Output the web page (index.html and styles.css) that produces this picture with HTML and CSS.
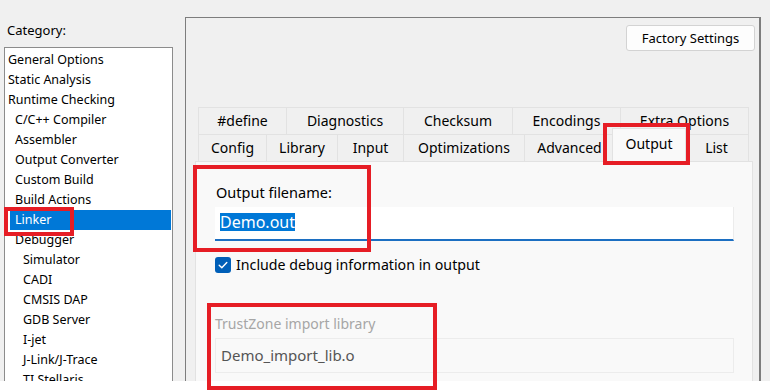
FILE: index.html
```html
<!DOCTYPE html>
<html>
<head>
<meta charset="utf-8">
<link rel="stylesheet" href="styles.css">
</head>
<body>
<div class="app">
  <div class="left">
    <div class="cat-label">Category:</div>
    <ul class="tree">
      <li class="l0"><span>General Options</span></li>
      <li class="l0"><span>Static Analysis</span></li>
      <li class="l0"><span>Runtime Checking</span></li>
      <li class="l1"><span>C/C++ Compiler</span></li>
      <li class="l1"><span>Assembler</span></li>
      <li class="l1"><span>Output Converter</span></li>
      <li class="l1"><span>Custom Build</span></li>
      <li class="l1"><span>Build Actions</span></li>
      <li class="l1 sel"><span>Linker</span></li>
      <li class="l1"><span>Debugger</span></li>
      <li class="l2"><span>Simulator</span></li>
      <li class="l2"><span>CADI</span></li>
      <li class="l2"><span>CMSIS DAP</span></li>
      <li class="l2"><span>GDB Server</span></li>
      <li class="l2"><span>I-jet</span></li>
      <li class="l2"><span>J-Link/J-Trace</span></li>
      <li class="l2"><span>TI Stellaris</span></li>
    </ul>
  </div>
  <div class="panel">
    <div class="toolbar">
      <button class="btn">Factory Settings</button>
    </div>
    <div class="tabs">
      <div class="tabrow">
        <div class="tab w88">#define</div>
        <div class="tab w117">Diagnostics</div>
        <div class="tab w109">Checksum</div>
        <div class="tab w108">Encodings</div>
        <div class="tab w129">Extra Options</div>
      </div>
      <div class="tabrow">
        <div class="tab w68">Config</div>
        <div class="tab w71">Library</div>
        <div class="tab w66">Input</div>
        <div class="tab w121">Optimizations</div>
        <div class="tab w90">Advanced</div>
        <div class="tab active w70">Output</div>
        <div class="tab w65">List</div>
      </div>
    </div>
    <div class="pane">
      <div class="field-label">Output filename:</div>
      <div class="textbox"><span class="selected-text">Demo.out</span></div>
      <label class="check-row">
        <span class="checkbox">
          <svg width="16" height="16" viewBox="0 0 16 16"><path d="M4.2 8.3 L6.8 10.8 L11.8 5.4" fill="none" stroke="#fff" stroke-width="1.4" stroke-linecap="round" stroke-linejoin="round"/></svg>
        </span>
        <span class="check-text">Include debug information in output</span>
      </label>
      <div class="dis-label">TrustZone import library</div>
      <div class="dis-box">Demo_import_lib.o</div>
    </div>
  </div>
</div>
<div class="strip"></div>

<div class="mark mark-linker"></div>
<div class="mark mark-output"></div>
<div class="mark mark-filename"></div>
<div class="mark mark-trust"></div>
</body>
</html>
```

FILE: styles.css
```css
* { box-sizing: border-box; }
html, body { margin: 0; padding: 0; }
body {
  width: 770px;
  height: 392px;
  overflow: hidden;
  background: #f0f0f0;
  font-family: "Noto Sans", "Open Sans", sans-serif;
  color: #000;
  position: relative;
}
.app {
  display: flex;
  height: 381px;
  overflow: hidden;
  padding-left: 4px;
  gap: 12px;
}
.strip { height: 11px; background: #fff; }

.left { width: 169px; padding-top: 21px; display: flex; flex-direction: column; }
.cat-label { font-size: 13px; line-height: 18px; padding-left: 3px; margin-bottom: 8px; }
.tree {
  list-style: none;
  margin: 0;
  padding: 2px 1px 0 0;
  background: #fff;
  border: 1px solid #8c8c8c;
  border-bottom: none;
  flex: 1;
  overflow: hidden;
}
.tree li { height: 20px; font-size: 12.5px; line-height: 20px; white-space: nowrap; }
.tree li span { display: block; height: 20px; }
.tree .l0 span { padding-left: 3px; }
.tree .l1 { padding-left: 5px; }
.tree .l1 span { padding-left: 5px; }
.tree .l2 { padding-left: 13px; }
.tree .l2 span { padding-left: 5px; }
.tree .sel span { background: #0078d7; color: #fff; }

.panel {
  width: 576px;
  margin-top: 17px;
  border-top: 1px solid #7d7d7d;
  border-left: 1px solid #7d7d7d;
  border-right: 2px solid #7d7d7d;
  display: flex;
  flex-direction: column;
}
.toolbar { display: flex; justify-content: flex-end; padding: 7px 4px 0 0; }
.btn {
  width: 129px;
  height: 26px;
  background: #fdfdfd;
  border: 1px solid #d3d3d3;
  border-radius: 3px;
  font-family: "Noto Sans", sans-serif;
  font-size: 13px;
  color: #000;
  padding: 0;
}
.tabs { margin: 56px 0 0 12px; width: 551px; }
.tabrow { display: flex; height: 27px; }
.tab {
  font-size: 14px;
  line-height: 25px;
  text-align: center;
  border-top: 1px solid #e2e2e2;
  border-left: 1px solid #e2e2e2;
  white-space: nowrap;
}
.tabrow .tab:last-child { border-right: 1px solid #e2e2e2; }
.tab.active {
  background: #f9f9f9;
  margin: -6px -2px 0 -2px;
  line-height: 29px;
  border: 1px solid #e2e2e2;
  border-bottom: none;
  position: relative;
  z-index: 1;
  width: 74px;
}
.w88 { width: 88px; } .w117 { width: 117px; } .w109 { width: 109px; }
.w108 { width: 108px; } .w129 { width: 129px; } .w68 { width: 68px; }
.w71 { width: 71px; } .w66 { width: 66px; } .w121 { width: 121px; }
.w90 { width: 90px; } .w70 { width: 70px; } .w65 { width: 65px; }

.pane {
  margin-left: 9px;
  width: 558px;
  flex: 1;
  background: #f9f9f9;
  border: 1px solid #e2e2e2;
  border-bottom: none;
  padding: 20px 0 0 19px;
}
.field-label { font-size: 14.5px; line-height: 20px; padding-left: 1px; }
.textbox {
  margin-top: 5px;
  width: 519px;
  height: 34px;
  background: #fff;
  border-right: 1px solid #ececec;
  border-bottom: 2px solid #1c6fc2;
  padding: 4px 0 0 5px;
}
.selected-text {
  display: inline-block;
  background: #0078d7;
  color: #fff;
  font-size: 16px;
  line-height: 18px;
  height: 18px;
}
.check-row { display: flex; align-items: center; gap: 5px; margin-top: 16px; height: 16px; }
.checkbox {
  width: 16px; height: 16px;
  border-radius: 3px;
  background: #005fb8;
  display: flex;
}
.check-text { font-size: 14.2px; line-height: 20px; }
.dis-label { margin-top: 41px; font-size: 14px; line-height: 20px; color: #a6a6a6; }
.dis-box {
  margin-top: 4px;
  width: 519px;
  height: 35px;
  border: 1px solid #ececec;
  background: #f9f9f9;
  color: #555;
  font-size: 15px;
  line-height: 20px;
  padding: 6px 0 0 5px;
}

.mark { position: absolute; border: 4px solid #e61d25; }
.mark-linker { left: 4px; top: 207px; width: 70px; height: 29px; }
.mark-output { left: 603px; top: 123px; width: 87px; height: 42px; }
.mark-filename { left: 193px; top: 165px; width: 178px; height: 87px; }
.mark-trust { left: 207px; top: 303px; width: 230px; height: 87px; }
```
